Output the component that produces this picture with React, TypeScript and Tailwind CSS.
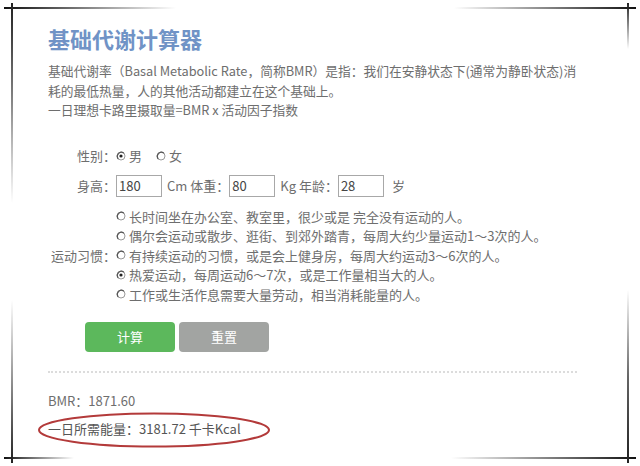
import React from "react";

const font = { fontFamily: '"Noto Sans CJK SC", "Noto Sans", sans-serif' };

function Radio({ checked }: { checked?: boolean }) {
  return (
    <svg width="10" height="10" viewBox="0 0 10 10" className="shrink-0">
      <circle cx="5" cy="5" r="4" fill="#fff" stroke="#9a9a9a" strokeWidth="1" />
      <path d="M2.2 7.8 A4 4 0 0 1 7.8 2.2" fill="none" stroke="#555" strokeWidth="1.2" />
      {checked && <circle cx="5" cy="5" r="1.6" fill="#222" />}
    </svg>
  );
}

function Input({ value }: { value: string }) {
  return (
    <div className="w-[46px] h-[22px] border border-[#a8a8a8] bg-white flex items-center pl-[2px] text-[13px] text-[#444]">
      {value}
    </div>
  );
}

const habits = [
  { t: "长时间坐在办公室、教室里，很少或是 完全没有运动的人。" },
  { t: "偶尔会运动或散步、逛街、到郊外踏青，每周大约少量运动1～3次的人。" },
  { t: "有持续运动的习惯，或是会上健身房，每周大约运动3～6次的人。" },
  { t: "热爱运动，每周运动6～7次，或是工作量相当大的人。", checked: true },
  { t: "工作或生活作息需要大量劳动，相当消耗能量的人。" },
];

export default function App() {
  return (
    <div className="relative w-[640px] h-[466px] bg-white overflow-hidden text-[#6e6e6e]" style={font}>
      {/* decorative frame corners */}
      <div className="absolute left-[4px] top-[7px] w-[172px] h-[2px] bg-gradient-to-r from-[#111] to-transparent" />
      <div className="absolute left-[11px] top-[3px] w-[2px] h-[200px] bg-gradient-to-b from-[#222] via-[#888] to-transparent" />
      <div className="absolute right-[4px] top-[7px] w-[182px] h-[2px] bg-gradient-to-l from-[#111] to-transparent" />
      <div className="absolute left-[627px] top-[3px] w-[2px] h-[46px] bg-gradient-to-b from-[#222] to-transparent" />
      <div className="absolute left-[4px] top-[457px] w-[70px] h-[2px] bg-gradient-to-r from-[#111] to-transparent" />
      <div className="absolute left-[11px] top-[300px] w-[2px] h-[163px] bg-gradient-to-t from-[#222] to-transparent" />
      <div className="absolute right-[4px] top-[457px] w-[185px] h-[2px] bg-gradient-to-l from-[#111] to-transparent" />
      <div className="absolute left-[627px] top-[290px] w-[2px] h-[173px] bg-gradient-to-t from-[#222] via-[#666] to-transparent" />

      <div className="pl-[48px] pr-[40px] flex flex-col">
        <h1 className="mt-[23px] text-[22px] leading-[30px] font-bold text-[#7093c6]">
          基础代谢计算器
        </h1>
        <div className="mt-[8px] text-[12.75px] leading-[19.5px]">
          <div>基础代谢率（Basal Metabolic Rate，简称BMR）是指：我们在安静状态下(通常为静卧状态)消</div>
          <div>耗的最低热量，人的其他活动都建立在这个基础上。</div>
          <div>一日理想卡路里摄取量=BMR x 活动因子指数</div>
        </div>

        <div className="mt-[26px] flex flex-col text-[13px]">
          <div className="flex items-center h-[20px]">
            <div className="w-[68px] text-right">性别：</div>
            <Radio checked />
            <span className="ml-[3px]">男</span>
            <span className="ml-[14px]" />
            <Radio />
            <span className="ml-[3px]">女</span>
          </div>
          <div className="mt-[9px] flex items-center h-[22px]">
            <div className="w-[68px] text-right">身高：</div>
            <Input value="180" />
            <span className="ml-[5px]">Cm 体重：</span>
            <Input value="80" />
            <span className="ml-[5px]">Kg 年龄：</span>
            <Input value="28" />
            <span className="ml-[8px]">岁</span>
          </div>
          <div className="mt-[10px] flex items-center">
            <div className="w-[68px] text-right">运动习惯：</div>
            <div className="flex flex-col">
              {habits.map((h, i) => (
                <div key={i} className="flex items-center h-[19.5px]">
                  <Radio checked={h.checked} />
                  <span className="ml-[3px]">{h.t}</span>
                </div>
              ))}
            </div>
          </div>
        </div>

        <div className="mt-[18px] ml-[37px] flex gap-[4px]">
          <button className="w-[90px] h-[30px] rounded-[4px] bg-[#5cb85c] text-white text-[13px]">计算</button>
          <button className="w-[90px] h-[30px] rounded-[4px] bg-[#a2a4a2] text-white text-[13px]">重置</button>
        </div>

        <div className="mt-[19px] w-[529px] border-t-[2px] border-dotted border-[#dcdcdc]" />

        <div className="mt-[18px] text-[13px] leading-[20px]">BMR：1871.60</div>
        <div className="mt-[8px] text-[13px] leading-[20px] text-[#555]">一日所需能量：3181.72 千卡Kcal</div>
      </div>

      <svg className="absolute left-0 top-0 pointer-events-none" width="640" height="466">
        <ellipse cx="154" cy="430" rx="115" ry="16.5" fill="none" stroke="#b33a3a" strokeWidth="2" />
      </svg>
    </div>
  );
}
